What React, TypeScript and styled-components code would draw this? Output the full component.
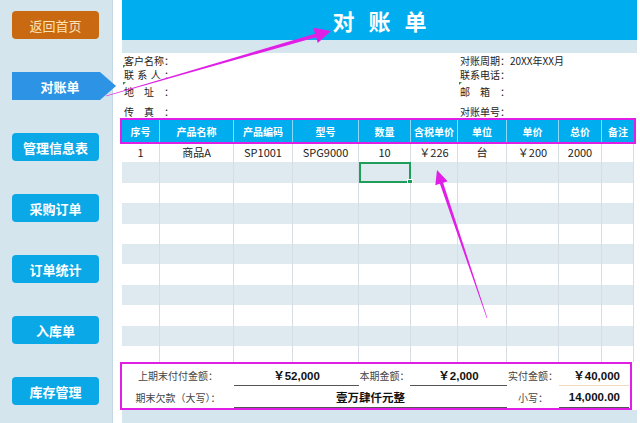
import React from 'react';
import styled, { createGlobalStyle } from 'styled-components';

const GlobalStyle = createGlobalStyle`
  html, body {
    margin: 0;
    padding: 0;
  }
  body {
    width: 640px;
    height: 423px;
    overflow: hidden;
    background: #fff;
    font-family: "Noto Sans CJK SC", "Noto Sans", sans-serif;
    color: #222;
  }
`;

const MAGENTA = '#e01fe6';
const COLS = [38, 74, 59, 66, 52, 47, 49, 52, 43, 32];

const Page = styled.div`
  position: relative;
  display: flex;
  width: 640px;
  height: 423px;
  overflow: hidden;
  background: #fff;
`;

const Sidebar = styled.nav`
  width: 113px;
  flex-shrink: 0;
  box-sizing: border-box;
  background: #d4e5ee;
  border-right: 1px solid #c5d9e4;
  display: flex;
  flex-direction: column;
  gap: 33px;
  padding: 11px 0 0 12px;
  position: relative;
  z-index: 2;
`;

type Variant = 'home' | 'active' | 'normal';

const NavButton = styled.div<{ $variant: Variant }>`
  width: ${p => (p.$variant === 'active' ? 104 : 87)}px;
  height: 28px;
  box-sizing: border-box;
  display: flex;
  align-items: center;
  justify-content: center;
  padding-right: ${p => (p.$variant === 'active' ? 8 : 0)}px;
  font-size: 13px;
  line-height: 1;
  font-weight: ${p => (p.$variant === 'home' ? 400 : 700)};
  color: ${p => (p.$variant === 'home' ? '#fbe3b8' : '#fff')};
  background: ${p =>
    p.$variant === 'home' ? '#c96a12' : p.$variant === 'active' ? '#2d93e4' : '#0aa8e6'};
  border-radius: ${p => (p.$variant === 'active' ? 0 : 4)}px;
  clip-path: ${p =>
    p.$variant === 'active' ? 'polygon(0 0, 88px 0, 100% 50%, 88px 100%, 0 100%)' : 'none'};
`;

const Main = styled.main`
  width: 515px;
  margin-left: 9px;
  display: flex;
  flex-direction: column;
`;

const TitleBar = styled.h1`
  margin: 0;
  height: 40px;
  background: #00aeef;
  color: #fff;
  font-size: 22px;
  font-weight: 700;
  letter-spacing: 14px;
  padding-left: 14px;
  display: flex;
  align-items: center;
  justify-content: center;
`;

const Strip = styled.div<{ $h: number }>`
  height: ${p => p.$h}px;
  background: #d6e6ee;
`;

const Info = styled.section`
  height: 65px;
  padding-left: 2px;
  display: flex;
  flex-direction: column;
`;

const InfoRow = styled.div<{ $h: number; $end?: boolean }>`
  height: ${p => p.$h}px;
  display: flex;
  align-items: ${p => (p.$end ? 'flex-end' : 'center')};
`;

const InfoField = styled.div<{ $w?: number; $mark?: boolean }>`
  position: relative;
  width: ${p => (p.$w ? `${p.$w}px` : 'auto')};
  display: flex;
  font-size: 10px;
  line-height: 12px;
  color: #222;

  &::before {
    content: '';
    display: ${p => (p.$mark ? 'block' : 'none')};
    position: absolute;
    left: -1px;
    top: -4px;
    border-top: 3px solid #2f8f3a;
    border-right: 3px solid transparent;
  }
`;

const LabelBox = styled.span`
  width: 50px;
  display: flex;
  justify-content: space-between;
  white-space: nowrap;
`;

const Label: React.FC<{ text: string }> = ({ text }) => (
  <LabelBox>
    {(text + '：').split('').map((c, i) => (
      <span key={i}>{c}</span>
    ))}
  </LabelBox>
);

const Table = styled.section`
  display: flex;
  flex-direction: column;
  width: 512px;
`;

const Row = styled.div<{ $shaded?: boolean; $h?: number }>`
  display: grid;
  grid-template-columns: ${COLS.map(c => `${c}px`).join(' ')};
  height: ${p => p.$h ?? 20.4}px;
  background: ${p => (p.$shaded ? '#deeaf0' : '#fff')};
  overflow: hidden;
`;

const HeaderRow = styled(Row)`
  height: 22px;
  margin-top: 2px;
  background: #00aeef;
  box-shadow: 0 0 0 2px ${MAGENTA};
  overflow: visible;
  position: relative;
  z-index: 1;
`;

const HeadCell = styled.div`
  display: flex;
  align-items: center;
  justify-content: center;
  color: #fff;
  font-size: 10px;
  font-weight: 700;
  border-right: 1px solid rgba(255, 255, 255, 0.55);

  &:last-child {
    border-right: none;
  }
`;

const Cell = styled.div<{ $selected?: boolean }>`
  position: relative;
  display: flex;
  align-items: center;
  justify-content: center;
  font-size: 11px;
  color: #222;
  border-right: 1px solid #d6dee3;

  &::after {
    content: '';
    display: ${p => (p.$selected ? 'block' : 'none')};
    position: absolute;
    inset: 0 -1px 0 0;
    border: 2px solid #1f9d5b;
  }
  &::before {
    content: '';
    display: ${p => (p.$selected ? 'block' : 'none')};
    position: absolute;
    right: -3px;
    bottom: -2px;
    width: 4px;
    height: 4px;
    background: #1f9d5b;
    border: 1px solid #fff;
    z-index: 1;
  }
`;

const Body = styled.div`
  height: 220px;
  overflow: hidden;
`;

const Footer = styled.section`
  width: 512px;
  height: 48px;
  margin-left: -2px;
  box-sizing: border-box;
  border: 2px solid ${MAGENTA};
  background: #fff;
  display: grid;
  grid-template-columns: 112px 125px 51px 97px 52px 70px;
  grid-template-rows: 22px 22px;
`;

const FLabel = styled.div`
  display: flex;
  align-items: center;
  justify-content: center;
  font-size: 10px;
  color: #444;
  white-space: nowrap;
`;

const FValue = styled.div<{ $span?: number; $line?: string; $right?: boolean }>`
  grid-column: span ${p => p.$span ?? 1};
  display: flex;
  align-items: center;
  justify-content: ${p => (p.$right ? 'flex-end' : 'center')};
  padding-right: ${p => (p.$right ? 9 : 0)}px;
  border-bottom: 1px solid ${p => p.$line ?? '#555'};
  font-family: "Liberation Sans", "Noto Sans CJK SC", sans-serif;
  font-size: 11.5px;
  font-weight: 700;
  color: #111;
  white-space: nowrap;
`;

const Overlay = styled.svg`
  position: absolute;
  left: 0;
  top: 0;
  width: 640px;
  height: 423px;
  pointer-events: none;
  z-index: 5;
`;

const arrowPoints = (
  x0: number,
  y0: number,
  x1: number,
  y1: number,
  tail: number,
  neck: number,
  headLen: number,
  headHalf: number
) => {
  const dx = x1 - x0;
  const dy = y1 - y0;
  const len = Math.hypot(dx, dy);
  const ux = dx / len;
  const uy = dy / len;
  const nx = -uy;
  const ny = ux;
  const bx = x1 - ux * headLen;
  const by = y1 - uy * headLen;
  const pts = [
    [x0 + (nx * tail) / 2, y0 + (ny * tail) / 2],
    [bx + (nx * neck) / 2, by + (ny * neck) / 2],
    [bx + nx * headHalf, by + ny * headHalf],
    [x1, y1],
    [bx - nx * headHalf, by - ny * headHalf],
    [bx - (nx * neck) / 2, by - (ny * neck) / 2],
    [x0 - (nx * tail) / 2, y0 - (ny * tail) / 2],
  ];
  return pts.map(p => p.map(v => v.toFixed(1)).join(',')).join(' ');
};

const NAV: { label: string; variant: Variant }[] = [
  { label: '返回首页', variant: 'home' },
  { label: '对账单', variant: 'active' },
  { label: '管理信息表', variant: 'normal' },
  { label: '采购订单', variant: 'normal' },
  { label: '订单统计', variant: 'normal' },
  { label: '入库单', variant: 'normal' },
  { label: '库存管理', variant: 'normal' },
];

const HEADERS = ['序号', '产品名称', '产品编码', '型号', '数量', '含税单价', '单位', '单价', '总价', '备注'];
const FIRST_ROW = ['1', '商品A', 'SP1001', 'SPG9000', '10', '￥226', '台', '￥200', '2000', ''];

const App: React.FC = () => {
  const rows = Array.from({ length: 11 }, (_, i) => i);

  return (
    <>
      <GlobalStyle />
      <Page>
        <Sidebar>
          {NAV.map(n => (
            <NavButton key={n.label} $variant={n.variant}>
              {n.label}
            </NavButton>
          ))}
        </Sidebar>

        <Main>
          <TitleBar>对账单</TitleBar>
          <Strip $h={13} />

          <Info>
            <InfoRow $h={15}>
              <InfoField $w={336}>
                <Label text="客户名称" />
              </InfoField>
              <InfoField>
                <Label text="对账周期" />
                <span>20XX年XX月</span>
              </InfoField>
            </InfoRow>
            <InfoRow $h={14}>
              <InfoField $w={336} $mark>
                <Label text="联系人" />
              </InfoField>
              <InfoField>
                <Label text="联系电话" />
              </InfoField>
            </InfoRow>
            <InfoRow $h={20}>
              <InfoField $w={336} $mark>
                <Label text="地址" />
              </InfoField>
              <InfoField $mark>
                <Label text="邮箱" />
              </InfoField>
            </InfoRow>
            <InfoRow $h={16} $end>
              <InfoField $w={336}>
                <Label text="传真" />
              </InfoField>
              <InfoField>
                <Label text="对账单号" />
              </InfoField>
            </InfoRow>
          </Info>

          <Table>
            <HeaderRow>
              {HEADERS.map(h => (
                <HeadCell key={h}>{h}</HeadCell>
              ))}
            </HeaderRow>
            <Body>
              {rows.map(r => (
                <Row key={r} $shaded={r % 2 === 1}>
                  {HEADERS.map((h, c) => (
                    <Cell key={h} $selected={r === 1 && c === 4}>
                      {r === 0 ? FIRST_ROW[c] : ''}
                    </Cell>
                  ))}
                </Row>
              ))}
            </Body>
          </Table>

          <Footer>
            <FLabel>上期末付付金额：</FLabel>
            <FValue>￥52,000</FValue>
            <FLabel>本期金额：</FLabel>
            <FValue>￥2,000</FValue>
            <FLabel>实付金额：</FLabel>
            <FValue $line="#f1d9c4" $right>
              ￥40,000
            </FValue>

            <FLabel>期末欠款（大写）：</FLabel>
            <FValue $span={3}>壹万肆仟元整</FValue>
            <FLabel>小写：</FLabel>
            <FValue $right>14,000.00</FValue>
          </Footer>
          <Strip $h={13} />
        </Main>

        <Overlay viewBox="0 0 640 423">
          <polygon points={arrowPoints(106, 96, 331, 31, 0.6, 3.6, 16, 8)} fill={MAGENTA} />
          <polygon points={arrowPoints(487, 318, 437, 170, 0.6, 3.4, 14, 6.5)} fill={MAGENTA} />
        </Overlay>
      </Page>
    </>
  );
};

export default App;
